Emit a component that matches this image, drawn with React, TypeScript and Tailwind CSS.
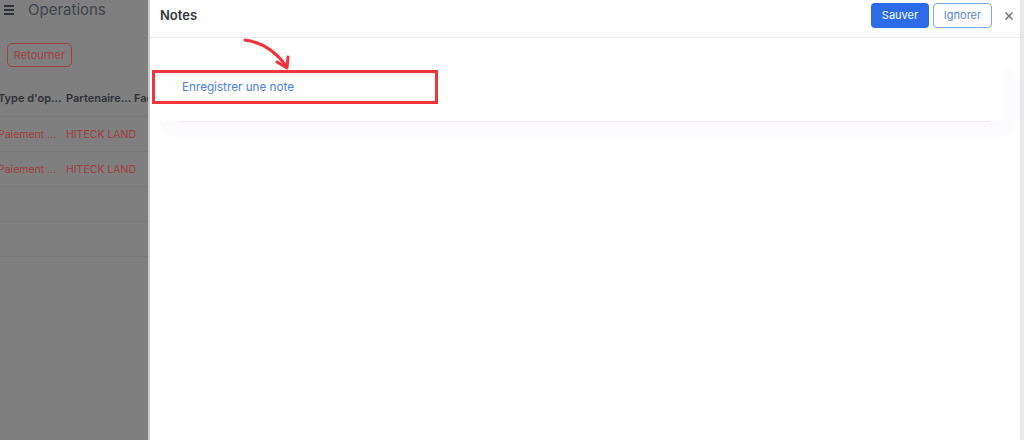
import { X } from 'lucide-react';

const font = { fontFamily: 'Inter, "Noto Sans", sans-serif' };

function Backdrop() {
  const rows = [
    { type: 'Paiement ...', partner: 'HITECK LAND' },
    { type: 'Paiement ...', partner: 'HITECK LAND' },
    { type: '', partner: '' },
    { type: '', partner: '' },
  ];
  return (
    <div className="w-[150px] shrink-0 h-full bg-[#7f7f7f] overflow-hidden border-r-2 border-r-[#c9c9c9]">
      <div className="flex items-center gap-[14px] pl-[4px] h-[20px]">
        <div className="flex flex-col gap-[2px] w-[10px]">
          <span className="h-[2px] bg-[#2c3038]" />
          <span className="h-[2px] bg-[#2c3038]" />
          <span className="h-[2px] bg-[#2c3038]" />
        </div>
        <span className="text-[15px] text-[#3d434d]">Operations</span>
      </div>
      <div className="pl-[7px] pt-[23px]">
        <div className="w-[65px] h-[24px] rounded-[5px] border border-[#a3403f] text-[#a3403f] text-[11px] flex items-center justify-center">
          Retourner
        </div>
      </div>
      <div className="mt-[13px] h-[37px] flex items-center border-b border-[#777a7a] text-[11px] font-semibold text-[#2e3138] whitespace-nowrap">
        <span className="w-[68px] shrink-0 -ml-[2px]">Type d'op...</span>
        <span className="w-[68px] shrink-0">Partenaire...</span>
        <span>Fac</span>
      </div>
      {rows.map((r, i) => (
        <div key={i} className="h-[35px] pt-px flex items-center border-b border-[#767878] text-[10.5px] text-[#a23c3b] whitespace-nowrap">
          <span className="w-[68px] shrink-0 -ml-[2px]">{r.type}</span>
          <span>{r.partner}</span>
        </div>
      ))}
    </div>
  );
}

function NotesPanel() {
  return (
    <div className="relative flex-1 h-full bg-white flex flex-col">
      <div className="h-[38px] flex items-start justify-between pt-[3px] pl-[10px] pr-[5px] border-b border-[#ececec] shrink-0">
        <span className="text-[13px] leading-[24px] font-semibold text-[#35383d]">Notes</span>
        <div className="flex items-center gap-[4px]">
          <button className="w-[58px] h-[25px] rounded-[4px] bg-[#2c6ce8] text-white text-[11px]">Sauver</button>
          <button className="w-[59px] h-[25px] rounded-[4px] border border-[#7ea5f2] text-[#5b84e0] text-[11px]">Ignorer</button>
          <X className="ml-[7px] text-[#7a7a7a]" size={12} strokeWidth={3.5} />
        </div>
      </div>
      <div className="mt-[27px] ml-[10px] mr-[4px] rounded-[18px] bg-[#fbfbfd] pb-[15px]">
        <div className="h-[57px] bg-[#fefefe] rounded-[6px] mr-[10px] flex flex-col">
          <div className="flex-1 flex items-start pt-[14px] pl-[22px]">
            <span className="text-[11.7px] text-[#4f7fe6]">Enregistrer une note</span>
          </div>
          <div className="h-px bg-[#f6e7f0] ml-[20px] mr-[16px]" />
        </div>
      </div>
      <div className="absolute left-[2px] top-[70px] w-[286px] h-[34px] border-[3px] border-[#f0353a]" />
      <svg className="absolute left-[92px] top-[36px]" width="52" height="36" viewBox="0 0 52 36" fill="none">
        <path d="M3 4 C 18 6, 32 13, 44 30" stroke="#f0353a" strokeWidth="3" strokeLinecap="round" />
        <path d="M35 26 L45 32 L46 21" stroke="#f0353a" strokeWidth="3" strokeLinecap="round" strokeLinejoin="round" />
      </svg>
    </div>
  );
}

export default function App() {
  return (
    <div className="w-[1024px] h-[440px] flex overflow-hidden bg-white" style={font}>
      <Backdrop />
      <NotesPanel />
      <div className="w-[4px] shrink-0 h-full bg-[#e8e8e8]" />
    </div>
  );
}
